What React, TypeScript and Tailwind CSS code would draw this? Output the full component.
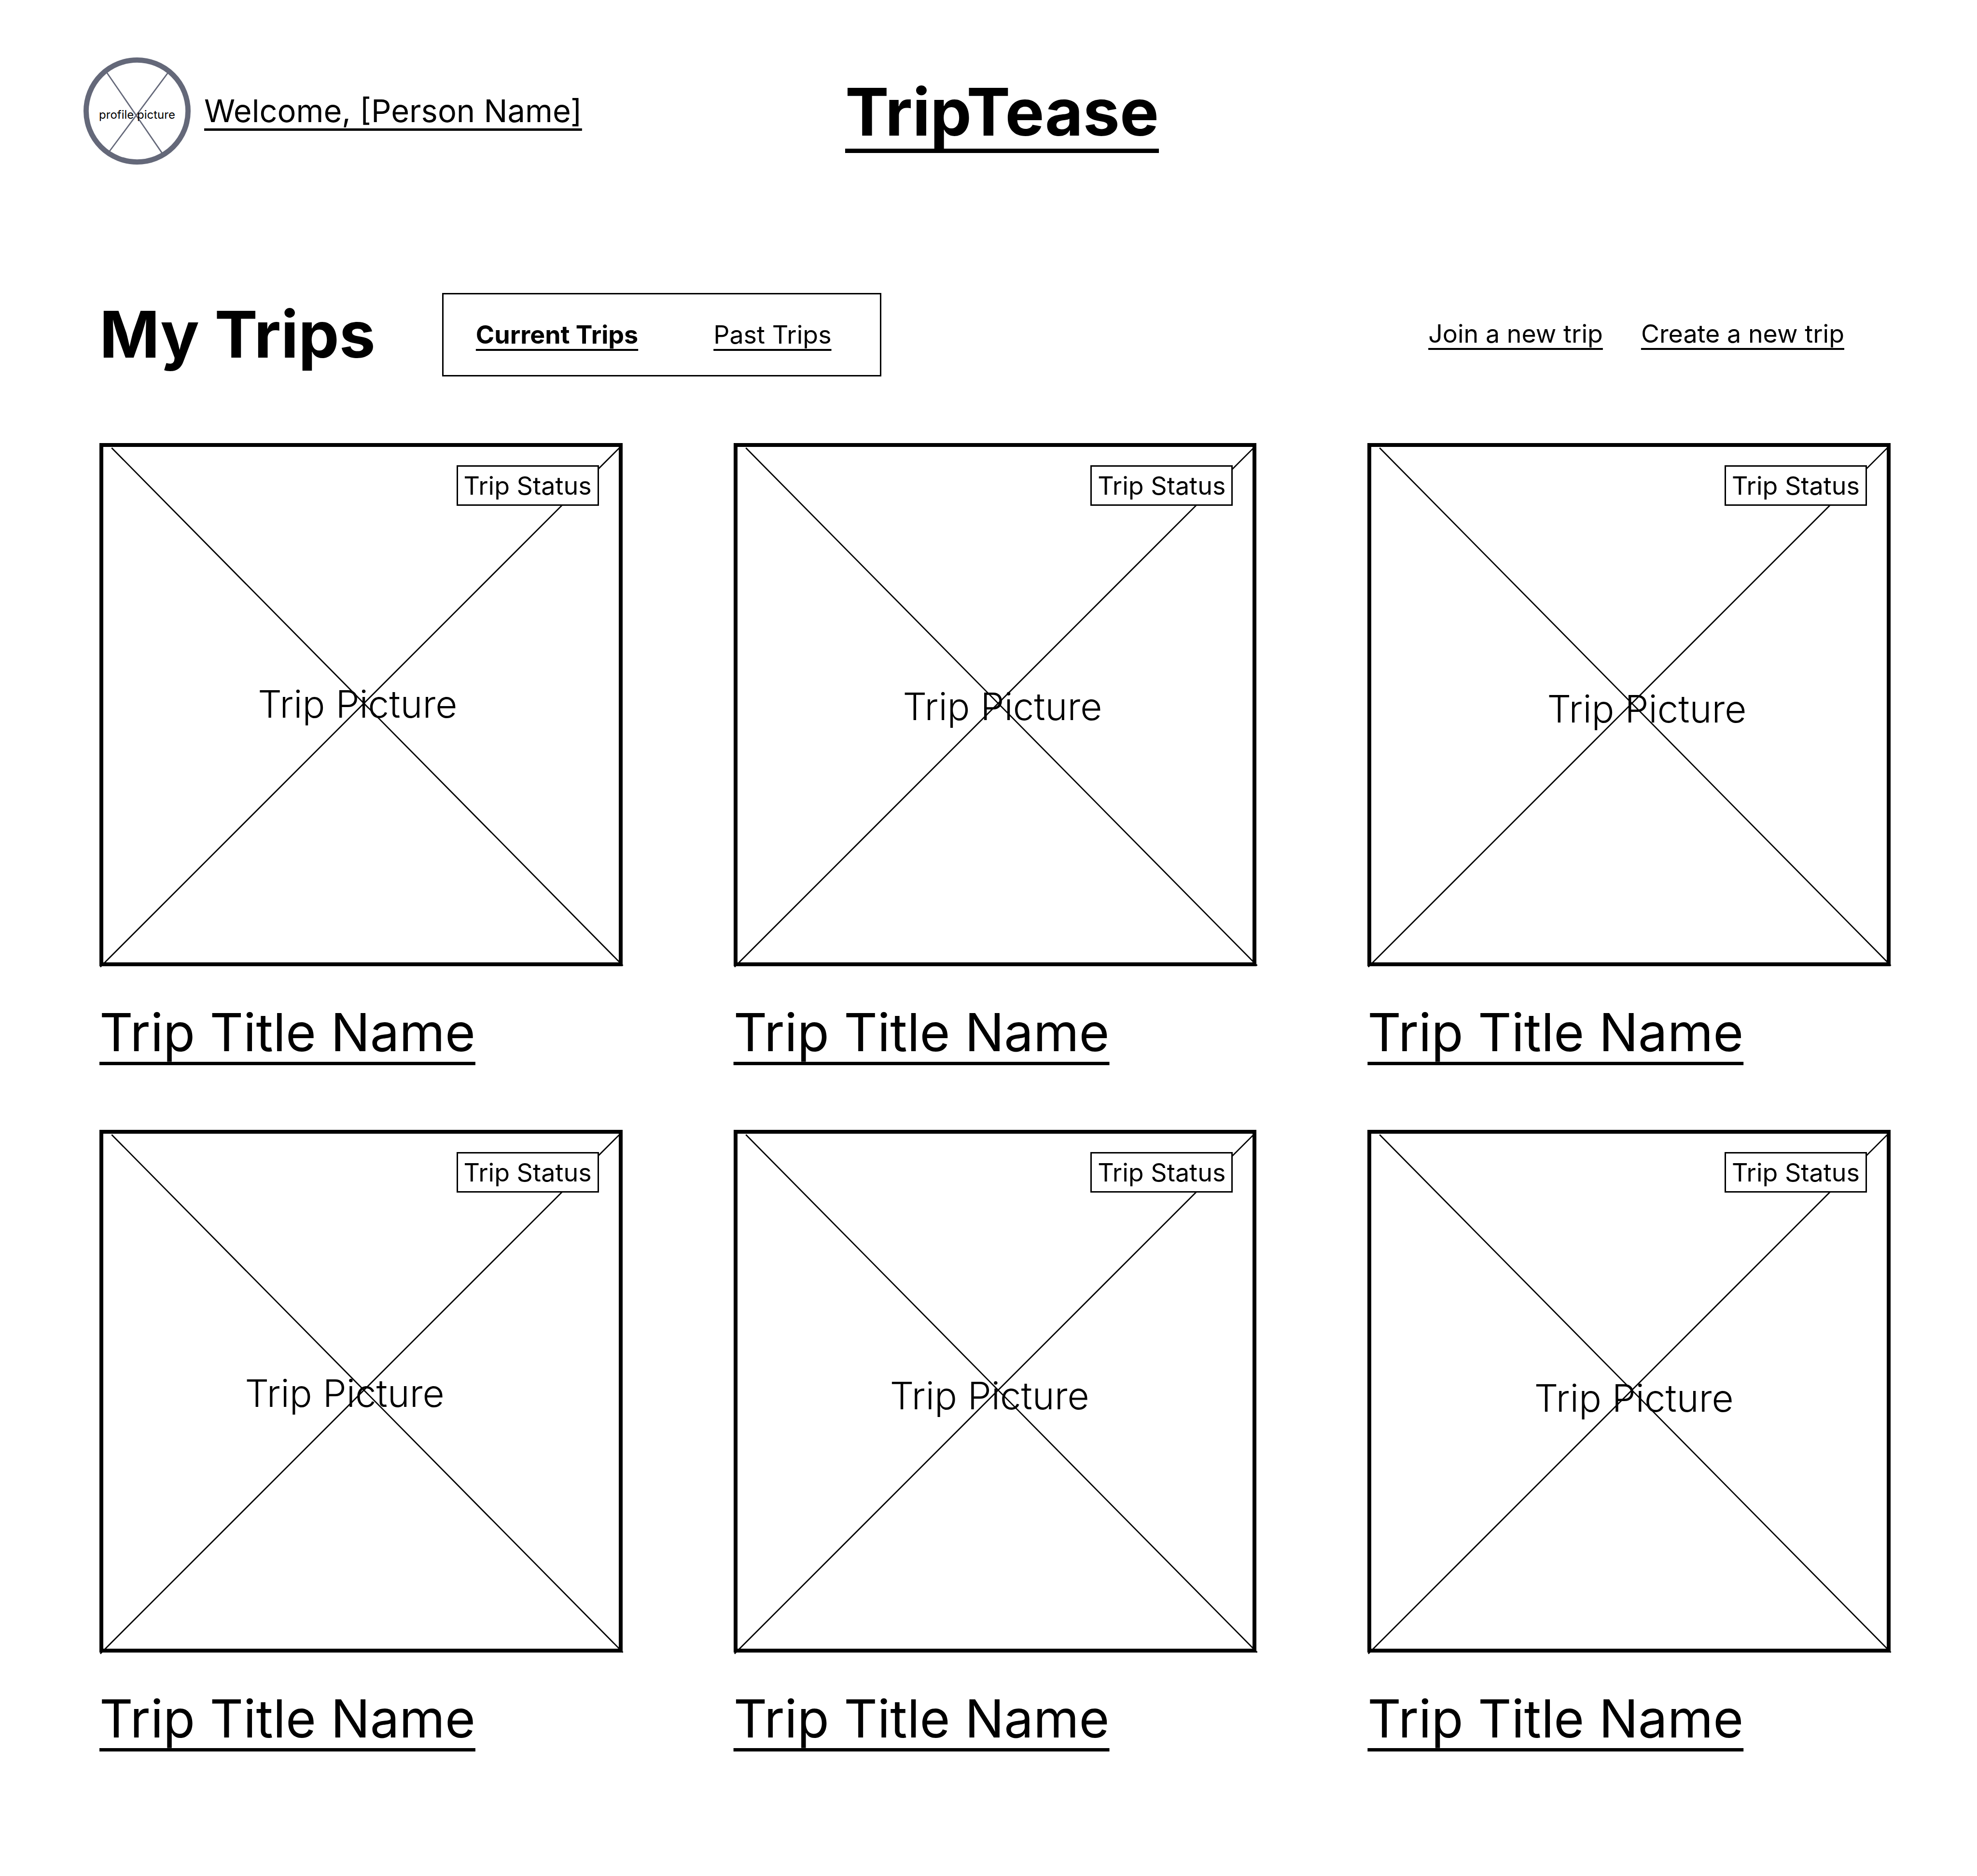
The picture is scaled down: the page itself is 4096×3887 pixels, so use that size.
const trips = [
  { id: 1, left: 30.0, top: 49.9 },
  { id: 2, left: 32.1, top: 50.4 },
  { id: 3, left: 34.1, top: 50.9 },
  { id: 4, left: 27.5, top: 50.4 },
  { id: 5, left: 29.6, top: 50.9 },
  { id: 6, left: 31.6, top: 51.4 },
];

const link =
  'underline decoration-4 underline-offset-[11px] [text-decoration-skip-ink:none]';

function Avatar() {
  return (
    <div className="relative size-[222px] shrink-0">
      <svg viewBox="0 0 246 246" className="size-full" fill="none" stroke="#646879" aria-hidden="true">
        <circle cx="123" cy="123" r="117" strokeWidth="12" />
        <path d="M53 34 180 219M194 35 60 215" strokeWidth="3" />
      </svg>
      <span className="absolute inset-x-0 top-1/2 text-center text-[24px] leading-[16px] whitespace-nowrap">
        profile picture
      </span>
    </div>
  );
}

function TripCard({ left, top }: { left: number; top: number }) {
  return (
    <article>
      <div className="relative aspect-square w-full border-8 border-black">
        <svg
          viewBox="0 0 1200 1200"
          className="absolute -inset-2 size-[calc(100%+16px)] overflow-visible"
          fill="none"
          stroke="#000"
          strokeWidth="3"
          aria-hidden="true"
        >
          <path d="M28 11 1201 1199M1195 9 2 1202" />
        </svg>
        <span
          className="absolute -translate-y-1/2 text-[78px] leading-[94px] font-light whitespace-nowrap"
          style={{ left: `${left}%`, top: `${top}%` }}
        >
          Trip Picture
        </span>
        <span className="absolute top-[38px] right-[41px] border-3 border-black bg-white px-3 pt-2 pb-1.5 text-[52px] leading-[64px] whitespace-nowrap">
          Trip Status
        </span>
      </div>
      <h2 className="mt-[72px] text-[108px] leading-[130px]">
        <a
          href="#trip"
          className="underline decoration-7 underline-offset-[22px] [text-decoration-skip-ink:none]"
        >
          Trip Title Name
        </a>
      </h2>
    </article>
  );
}

export default function App() {
  return (
    <div className="min-h-screen bg-white pt-[119px] pb-[260px] font-['Inter',sans-serif] text-black">
      <header className="grid grid-cols-[1fr_auto_1fr] items-center pr-[117px] pl-[173px]">
        <div className="flex items-center gap-7">
          <Avatar />
          <a
            href="#profile"
            className="text-[65px] leading-[78px] whitespace-nowrap underline decoration-5 underline-offset-[13px] [text-decoration-skip-ink:none]"
          >
            Welcome, [Person Name]
          </a>
        </div>
        <h1 className="pt-1 text-[136px] leading-[164px] font-bold">
          <a
            href="#home"
            className="underline decoration-9 underline-offset-[27px] [text-decoration-skip-ink:none]"
          >
            TripTease
          </a>
        </h1>
      </header>

      <main className="pr-[179px] pl-[206px]">
        <div className="mt-[266px] flex items-center">
          <h2 className="pb-1 text-[134px] leading-[164px] font-bold whitespace-nowrap">My Trips</h2>
          <nav className="ml-[138px] flex h-[173px] w-[910px] items-center gap-[156px] border-3 border-black pl-[67px] text-[52px] leading-[64px] whitespace-nowrap">
            <a href="#current" aria-current="page" className={`${link} font-bold`}>
              Current Trips
            </a>
            <a href="#past" className={link}>
              Past Trips
            </a>
          </nav>
          <div className="mr-[96px] ml-auto flex gap-[79px] pb-1 text-[52px] leading-[64px] whitespace-nowrap">
            <a href="#join" className={link}>
              Join a new trip
            </a>
            <a href="#create" className={link}>
              Create a new trip
            </a>
          </div>
        </div>

        <section className="mt-[138px] grid grid-cols-3 gap-x-[230px] gap-y-[137px]">
          {trips.map((trip) => (
            <TripCard key={trip.id} left={trip.left} top={trip.top} />
          ))}
        </section>
      </main>
    </div>
  );
}
